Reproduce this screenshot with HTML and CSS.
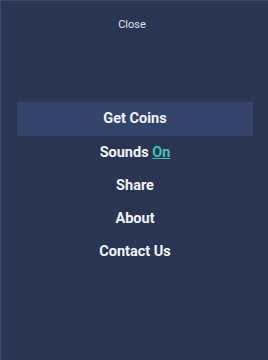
FILE: index.html
```html
<!DOCTYPE html>
<html lang="en">
<head>
  <meta charset="UTF-8" />
  <meta name="viewport" content="width=device-width, initial-scale=1.0"/>
  <title>Menu</title>
  <link rel="stylesheet" href="styles.css">
</head>
<body>

  <div class="menu">
    <button class="close">Close</button>
    <ul class="items">
      <li class="item active">Get Coins</li>
      <li class="item">Sounds <span class="toggle">On</span></li>
      <li class="item">Share</li>
      <li class="item">About</li>
      <li class="item">Contact Us</li>
    </ul>
  </div>

</body>
</html>
```

FILE: styles.css
```css
* {
  margin: 0;
  padding: 0;
  box-sizing: border-box;
  font-family: Roboto, 'Liberation Sans', Arial, sans-serif;
}

body {
  background-color: #293552;
  width: 268px;
  height: 360px;
  overflow: hidden;
}

.menu {
  height: 360px;
  border-left: 1px solid #3c4a6b;
  border-top: 1px solid #3a4868;
  display: flex;
  flex-direction: column;
  align-items: center;
}

.close {
  margin-top: 17px;
  margin-right: 5px;
  background: transparent;
  border: none;
  color: #dfe3ea;
  font-size: 11px;
  line-height: 14px;
  cursor: pointer;
}

.items {
  list-style: none;
  width: 100%;
  margin-top: 70px;
  padding: 0 15px 0 16px;
}

.item {
  height: 33px;
  line-height: 33px;
  text-align: center;
  color: #f2f4f8;
  font-size: 14.5px;
  font-weight: bold;
}

.item.active {
  background-color: #34436a;
  height: 34px;
  line-height: 34px;
}

.toggle {
  color: #3fc1b0;
  text-decoration: underline;
}
```
